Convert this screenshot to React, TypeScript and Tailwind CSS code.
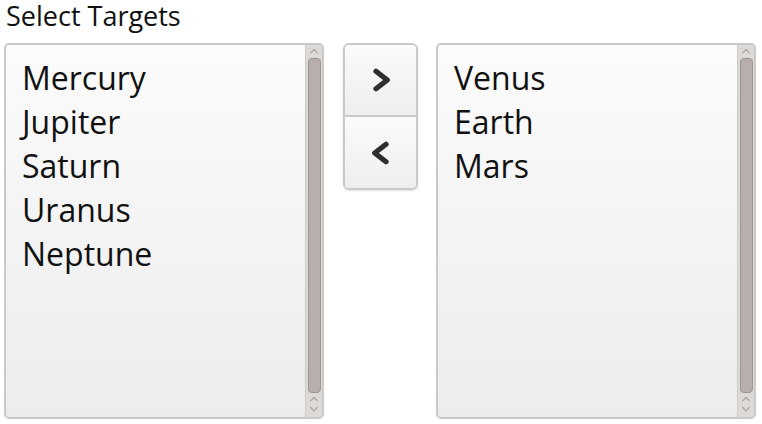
import React from 'react';

const left = ['Mercury', 'Jupiter', 'Saturn', 'Uranus', 'Neptune'];
const right = ['Venus', 'Earth', 'Mars'];

function Chevron({ dir, className }: { dir: 'up' | 'down' | 'left' | 'right'; className?: string }) {
  const d = {
    up: 'M2 7 L6 3 L10 7',
    down: 'M2 3 L6 7 L10 3',
    left: 'M8 2.5 L3.5 6 L8 9.5',
    right: 'M4 2.5 L8.5 6 L4 9.5',
  }[dir];
  return (
    <svg viewBox="0 0 12 12" className={className} fill="none" stroke="currentColor" strokeLinecap="round" strokeLinejoin="round">
      <path d={d} />
    </svg>
  );
}

function Scrollbar() {
  return (
    <div className="flex w-[17px] flex-col items-center bg-[#dcd9d7] border-l border-[#cfcbc9]">
      <Chevron dir="up" className="mt-[2px] h-[10px] w-[10px] text-[#a9a5a3] [stroke-width:1.5]" />
      <div className="mt-[1px] w-[13px] flex-1 rounded-[4px] border border-[#9e9693] bg-[#b8afac]" />
      <Chevron dir="up" className="mt-[2px] h-[10px] w-[10px] text-[#a9a5a3] [stroke-width:1.5]" />
      <Chevron dir="down" className="mb-[2px] h-[10px] w-[10px] text-[#a9a5a3] [stroke-width:1.5]" />
    </div>
  );
}

function ListBox({ items }: { items: string[] }) {
  return (
    <div className="flex h-[376px] w-[320px] overflow-hidden rounded-[5px] border-2 border-[#c9c9c9] bg-gradient-to-b from-[#fbfbfb] to-[#ececec]">
      <ul className="flex-1 pl-[16px] pt-[11px]">
        {items.map((it) => (
          <li key={it} className="text-[32px] leading-[44px] text-[#111]">
            {it}
          </li>
        ))}
      </ul>
      <Scrollbar />
    </div>
  );
}

export default function App() {
  return (
    <div className="h-[424px] w-[762px] bg-white font-['Open_Sans',sans-serif]">
      <div className="h-[32px] pl-[6px] text-[27px] leading-[32px] text-[#111]">Select Targets</div>
      <div className="mt-[11px] flex items-start pl-[4px]">
        <ListBox items={left} />
        <div className="ml-[19px] mr-[18px] flex w-[75px] flex-col overflow-hidden rounded-[6px] border-2 border-[#c9c9c9] shadow-[0_1px_2px_rgba(0,0,0,0.12)]">
          <button className="flex h-[70px] items-center justify-center bg-gradient-to-b from-[#fbfbfb] to-[#eeeeee]">
            <Chevron dir="right" className="h-[30px] w-[30px] text-[#2e2e2e] [stroke-width:2.1]" />
          </button>
          <div className="h-[2px] bg-[#c9c9c9]" />
          <button className="flex h-[71px] items-center justify-center bg-gradient-to-b from-[#fbfbfb] to-[#eeeeee]">
            <Chevron dir="left" className="h-[30px] w-[30px] text-[#2e2e2e] [stroke-width:2.1]" />
          </button>
        </div>
        <ListBox items={right} />
      </div>
    </div>
  );
}
